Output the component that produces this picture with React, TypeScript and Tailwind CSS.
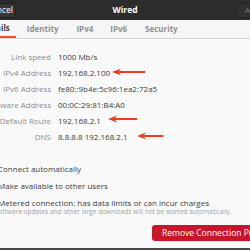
import React from "react"

const Arrow: React.FC<{ left: number; top: number; width: number }> = ({ left, top, width }) => (
    <svg
        className="absolute"
        style={{ left, top }}
        width={width}
        height={8}
        viewBox={`0 0 ${width} 8`}
    >
        <path d={`M0 4 L9 0.5 L7 3 L${width} 3 L${width} 5 L7 5 L9 7.5 Z`} fill="#ea3f1f" />
    </svg>
)

const rows: [string, string][] = [
    ["Link speed", "1000 Mb/s"],
    ["IPv4 Address", "192.168.2.100"],
    ["IPv6 Address", "fe80::9b4e:5c96:1ea2:72a5"],
    ["Hardware Address", "00:0C:29:81:B4:A0"],
    ["Default Route", "192.168.2.1"],
    ["DNS", "8.8.8.8 192.168.2.1"],
]

const App: React.FC = () => {
    return (
        <div className="relative w-[250px] h-[250px] overflow-hidden bg-[#fafafa] flex flex-col font-['Open_Sans',sans-serif] text-[8px]">
            {/* Header bar */}
            <div className="h-[20px] shrink-0 bg-[#2c2c2c] flex items-center">
                <div className="flex-1 flex">
                    <div className="-ml-[30px] w-[46px] h-[15px] rounded-[3px] bg-[#363636] border border-[#1f1f1f] flex items-center justify-end pr-[2px] text-white text-[8.5px]">
                        Cancel
                    </div>
                </div>
                <div className="text-white font-bold text-[8.5px]">Wired</div>
                <div className="flex-1 flex justify-end">
                    <div className="-mr-[30px] w-[44px] h-[15px] rounded-[3px] bg-[#303030] border border-[#222] flex items-center pl-[8px] text-[#777]">
                        Apply
                    </div>
                </div>
            </div>

            {/* Tabs */}
            <div className="h-[19px] shrink-0 bg-[#f6f6f6] border-b border-[#d9d5d1] flex items-end font-bold text-[#8f9192]">
                <div className="-ml-[21px] h-full flex items-center pr-[6px] pl-[3px] border-b-2 border-[#e95420] text-[#3d3d3d]">
                    Details
                </div>
                <div className="h-full flex items-center ml-[11px]">Identity</div>
                <div className="h-full flex items-center ml-[18px]">IPv4</div>
                <div className="h-full flex items-center ml-[17px]">IPv6</div>
                <div className="h-full flex items-center ml-[18px]">Security</div>
            </div>

            {/* Details grid */}
            <div className="pt-[10px] grid grid-cols-[51px_1fr] gap-x-[7px]">
                {rows.map(([label, value]) => (
                    <React.Fragment key={label}>
                        <div className="h-[16px] flex items-center justify-end whitespace-nowrap text-[#8c8e8f]">
                            {label}
                        </div>
                        <div className="h-[16px] flex items-center whitespace-nowrap text-[#3c3c3c]">{value}</div>
                    </React.Fragment>
                ))}
            </div>

            {/* Checkboxes */}
            <div className="mt-[15px] flex flex-col text-[#3c3c3c] -ml-[22px]">
                <label className="h-[17px] flex items-center gap-[6px]">
                    <span className="w-[14px] h-[14px] rounded-[3px] border border-[#c0bdb9] bg-white" />
                    Connect automatically
                </label>
                <label className="h-[18px] flex items-center gap-[6px]">
                    <span className="w-[14px] h-[14px] rounded-[3px] border border-[#c0bdb9] bg-white" />
                    Make available to other users
                </label>
                <div className="flex gap-[6px] pt-[2px]">
                    <span className="w-[14px] h-[14px] rounded-[3px] border border-[#c0bdb9] bg-white" />
                    <div className="flex flex-col">
                        <span className="leading-[11px] whitespace-nowrap">Metered connection: has data limits or can incur charges</span>
                        <span className="text-[6.5px] leading-[8px] text-[#a3a3a3] whitespace-nowrap -ml-[3px]">
                            Software updates and other large downloads will not be started automatically.
                        </span>
                    </div>
                </div>
            </div>

            {/* Remove button */}
            <div className="mt-[9px] pl-[152px]">
                <div className="w-[140px] h-[16px] rounded-[3px] bg-[#c7162b] text-white flex items-center pl-[10px] whitespace-nowrap text-[8.5px]">
                    Remove Connection Profile
                </div>
            </div>

            <div className="mt-auto h-[2px] bg-[#4a4a4a]" />

            <Arrow left={112} top={68} width={33} />
            <Arrow left={108} top={115} width={29} />
            <Arrow left={137} top={132} width={26} />
        </div>
    )
}

export default App
